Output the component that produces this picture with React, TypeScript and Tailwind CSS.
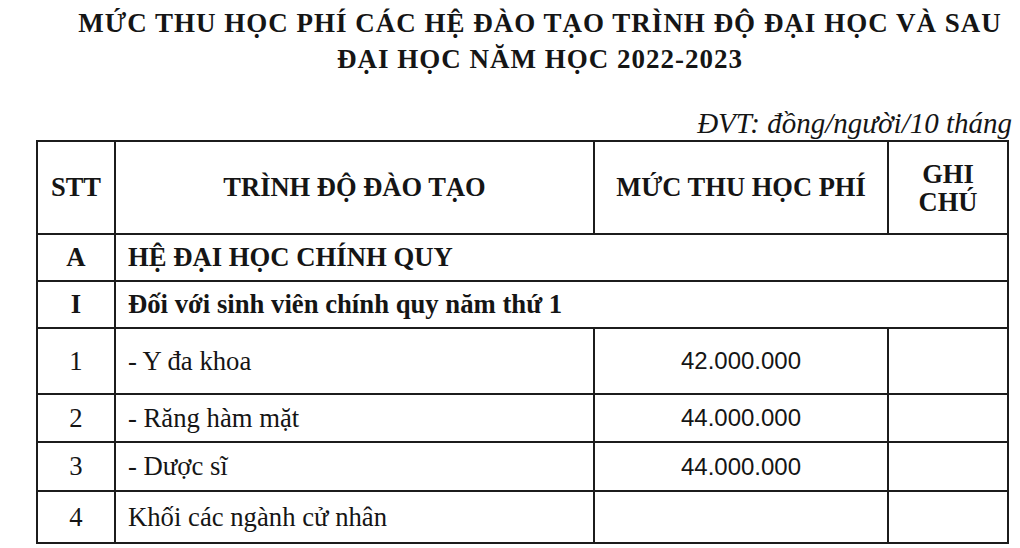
const serif = "font-['Liberation_Serif','Times_New_Roman',serif]";

type Row = {
  stt: string;
  name: string;
  fee?: string;
  bold?: boolean;
  span?: boolean;
  h: string;
};

const rows: Row[] = [
  { stt: "A", name: "HỆ ĐẠI HỌC CHÍNH QUY", bold: true, span: true, h: "h-[47px]" },
  { stt: "I", name: "Đối với sinh viên chính quy năm thứ 1", bold: true, span: true, h: "h-[47px]" },
  { stt: "1", name: "- Y đa khoa", fee: "42.000.000", h: "h-[66px]" },
  { stt: "2", name: "- Răng hàm mặt", fee: "44.000.000", h: "h-[48px]" },
  { stt: "3", name: "- Dược sĩ", fee: "44.000.000", h: "h-[49px]" },
  { stt: "4", name: "Khối các ngành cử nhân", fee: "", h: "h-[52px]" },
];

const cell = "border-2 border-[#1c1c1c] align-middle";

const App = () => {
  return (
    <div className={`w-[1020px] h-[548px] bg-white text-[#151515] overflow-hidden ${serif}`}>
      <div className="pt-[5px] pl-[60px] text-center font-bold text-[27px] leading-[36px] tracking-[1px]">
        <div>MỨC THU HỌC PHÍ CÁC HỆ ĐÀO TẠO TRÌNH ĐỘ ĐẠI HỌC VÀ SAU</div>
        <div>ĐẠI HỌC NĂM HỌC 2022-2023</div>
      </div>

      <div className="mt-[31px] pr-[8px] text-right italic text-[29px] leading-[30px]">
        ĐVT: đồng/người/10 tháng
      </div>

      <table className="mt-[2px] ml-[36px] w-[971px] table-fixed border-collapse">
        <colgroup>
          <col className="w-[78px]" />
          <col className="w-[479px]" />
          <col className="w-[294px]" />
          <col className="w-[120px]" />
        </colgroup>
        <thead>
          <tr className="h-[93px] font-bold text-[26.5px]">
            <th className={`${cell} text-center`}>STT</th>
            <th className={`${cell} text-center`}>TRÌNH ĐỘ ĐÀO TẠO</th>
            <th className={`${cell} text-center`}>MỨC THU HỌC PHÍ</th>
            <th className={`${cell} text-center leading-[28px]`}>
              GHI
              <br />
              CHÚ
            </th>
          </tr>
        </thead>
        <tbody className="text-[26.7px]">
          {rows.map((r) => (
            <tr key={r.stt} className={r.h}>
              <td className={`${cell} text-center ${r.bold ? "font-bold" : ""}`}>{r.stt}</td>
              {r.span ? (
                <td colSpan={3} className={`${cell} px-[12px] font-bold`}>
                  {r.name}
                </td>
              ) : (
                <>
                  <td className={`${cell} px-[12px]`}>{r.name}</td>
                  <td className={`${cell} text-center font-['Liberation_Sans',Arial,sans-serif] text-[24px]`}>
                    {r.fee}
                  </td>
                  <td className={cell}></td>
                </>
              )}
            </tr>
          ))}
        </tbody>
      </table>
    </div>
  );
};

export default App;
